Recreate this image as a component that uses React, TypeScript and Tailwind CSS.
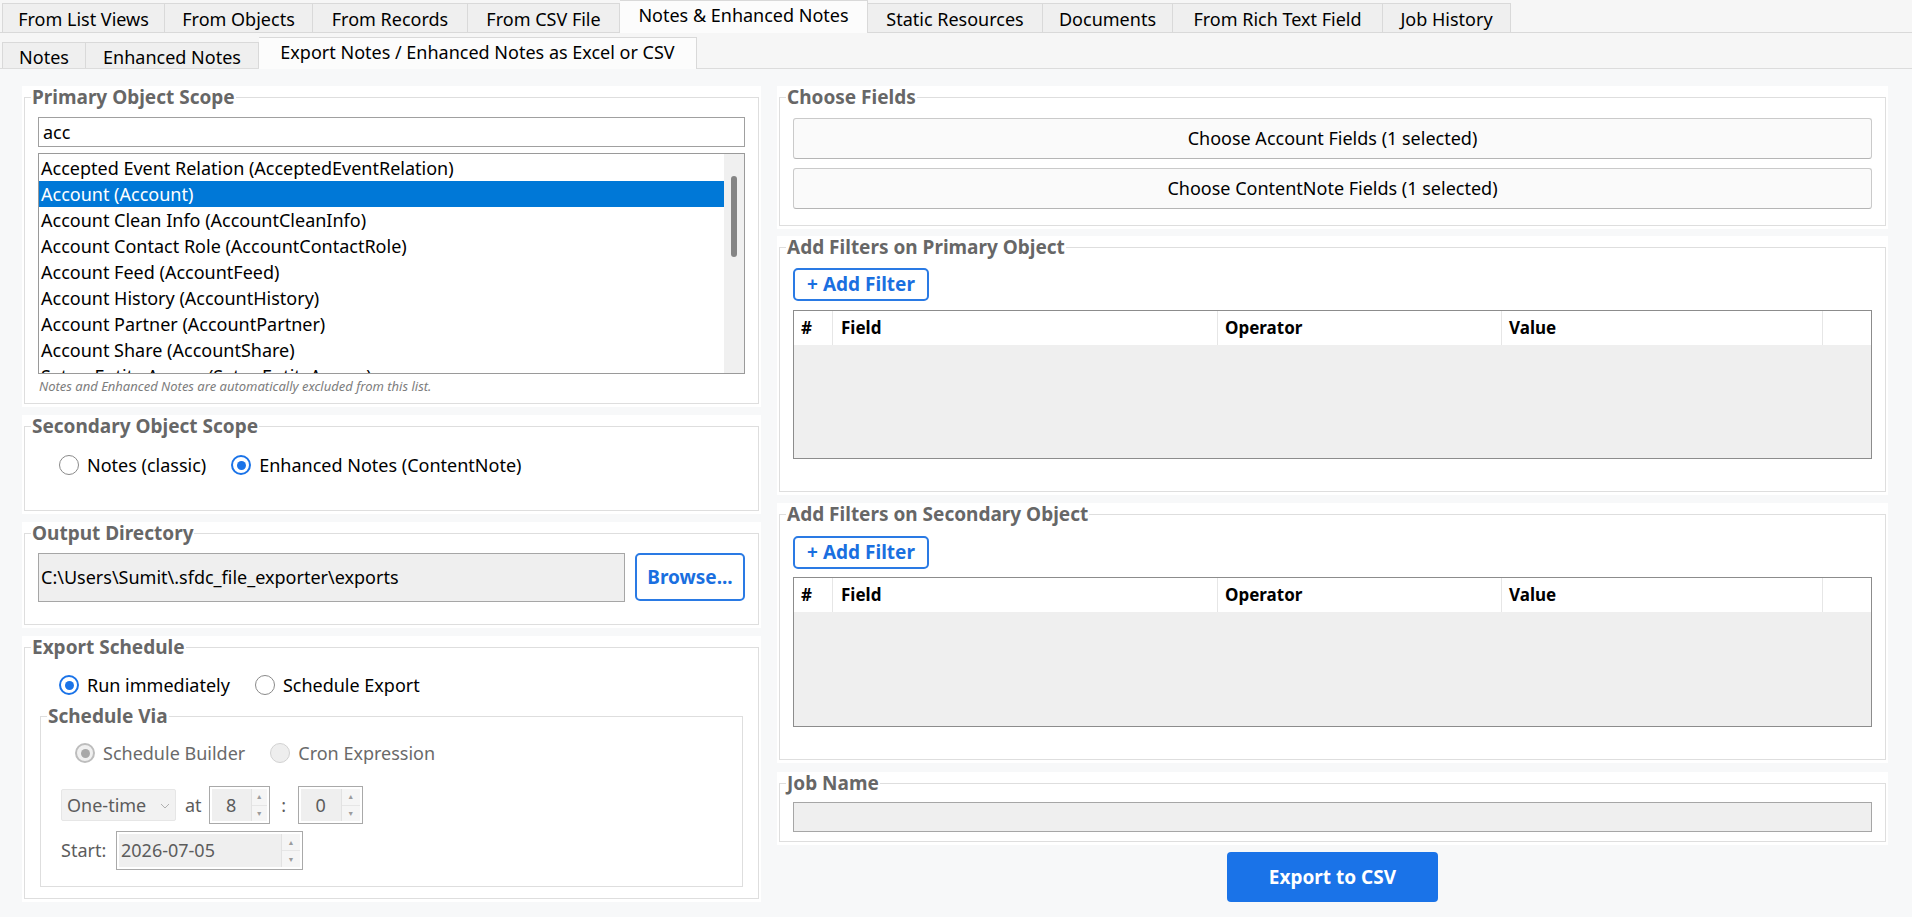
import React from "react";

function Group({
  title,
  outer,
  children,
}: {
  title: string;
  outer: string;
  children?: React.ReactNode;
}) {
  return (
    <div className={`bg-white px-[2px] pb-[3px] flex flex-col ${outer}`}>
      <fieldset className="flex-1 min-w-0 border border-[#dedede] flex flex-col">
        <legend className="ml-[6px] px-[1px] text-[19px] leading-[22px] font-bold text-[#676767]">
          {title}
        </legend>
        {children}
      </fieldset>
    </div>
  );
}

function Radio({
  checked,
  disabled,
  label,
}: {
  checked?: boolean;
  disabled?: boolean;
  label: string;
}) {
  let circle: React.ReactNode;
  if (disabled) {
    circle = checked ? (
      <div className="w-[20px] h-[20px] rounded-full border-2 border-[#bdbdbd] bg-[#f0f0f0] flex items-center justify-center">
        <div className="w-[9px] h-[9px] rounded-full bg-[#a8a8a8]" />
      </div>
    ) : (
      <div className="w-[20px] h-[20px] rounded-full border border-[#d2d2d2] bg-[#eeeeee]" />
    );
  } else {
    circle = checked ? (
      <div className="w-[20px] h-[20px] rounded-full border-2 border-[#1a73e8] bg-white flex items-center justify-center">
        <div className="w-[9px] h-[9px] rounded-full bg-[#1a73e8]" />
      </div>
    ) : (
      <div className="w-[20px] h-[20px] rounded-full border-[1.5px] border-[#8a8a8a] bg-white" />
    );
  }
  return (
    <div className="flex items-center gap-[8px] h-[24px]">
      {circle}
      <span className={disabled ? "text-[#6a6a6a]" : "text-black"}>{label}</span>
    </div>
  );
}

function Arrows({ w }: { w: string }) {
  return (
    <div className={`${w} flex flex-col bg-[#f5f5f5] border-l border-[#e2e2e2]`}>
      <div className="flex-1 flex items-center justify-center text-[7px] leading-none text-[#9c9c9c]">
        ▲
      </div>
      <div className="flex-1 flex items-center justify-center text-[7px] leading-none text-[#9c9c9c] border-t border-[#e6e6e6]">
        ▼
      </div>
    </div>
  );
}

function FilterTable({ h }: { h: string }) {
  return (
    <div className={`border border-[#8c8c8c] flex flex-col ${h}`}>
      <div className="flex h-[34px] bg-white font-bold text-black text-[17px]">
        <div className="w-[39px] pl-[7px] border-r border-[#e6e6e6] flex items-center">#</div>
        <div className="w-[385px] pl-[8px] border-r border-[#e6e6e6] flex items-center">Field</div>
        <div className="w-[284px] pl-[7px] border-r border-[#e6e6e6] flex items-center">Operator</div>
        <div className="w-[321px] pl-[7px] border-r border-[#e6e6e6] flex items-center">Value</div>
        <div className="flex-1" />
      </div>
      <div className="flex-1 bg-[#efefef]" />
    </div>
  );
}

function AddFilter() {
  return (
    <button className="w-[136px] h-[33px] border-2 border-[#2a7ae4] rounded-[5px] bg-white text-[#1a6fe0] font-bold text-[19px] leading-none flex items-center justify-center">
      + Add Filter
    </button>
  );
}

const items = [
  "Accepted Event Relation (AcceptedEventRelation)",
  "Account (Account)",
  "Account Clean Info (AccountCleanInfo)",
  "Account Contact Role (AccountContactRole)",
  "Account Feed (AccountFeed)",
  "Account History (AccountHistory)",
  "Account Partner (AccountPartner)",
  "Account Share (AccountShare)",
  "Setup Entity Access (SetupEntityAccess)",
];

export default function App() {
  const topTabs: { label: string; w: string; sel?: boolean }[] = [
    { label: "From List Views", w: "w-[163px] border-l" },
    { label: "From Objects", w: "w-[148px]" },
    { label: "From Records", w: "w-[155px]" },
    { label: "From CSV File", w: "w-[152px]" },
    { label: "Notes & Enhanced Notes", w: "w-[248px]", sel: true },
    { label: "Static Resources", w: "w-[175px]" },
    { label: "Documents", w: "w-[130px]" },
    { label: "From Rich Text Field", w: "w-[210px]" },
    { label: "Job History", w: "w-[128px]" },
  ];
  const subTabs: { label: string; w: string; sel?: boolean }[] = [
    { label: "Notes", w: "w-[84px] border-l" },
    { label: "Enhanced Notes", w: "w-[173px]" },
    { label: "Export Notes / Enhanced Notes as Excel or CSV", w: "w-[438px]", sel: true },
  ];

  return (
    <div className="w-[1912px] h-[917px] overflow-hidden bg-[#f7f8f9] font-['Noto_Sans',sans-serif] text-[18px] text-black">
      {/* top tabs */}
      <div className="h-[33px] flex items-end pl-[2px] bg-[#f6f6f6] border-b border-[#d9d9d9]">
        {topTabs.map((t) =>
          t.sel ? (
            <div
              key={t.label}
              className={`${t.w} h-[33px] -mb-px bg-[#fcfcfc] border-t border-r border-[#d9d9d9] flex items-center justify-center pb-[3px] whitespace-nowrap`}
            >
              {t.label}
            </div>
          ) : (
            <div
              key={t.label}
              className={`${t.w} h-[29px] bg-[#efefef] border-t border-r border-[#d9d9d9] flex items-center justify-center pt-[2px] whitespace-nowrap`}
            >
              {t.label}
            </div>
          )
        )}
      </div>
      {/* sub tabs */}
      <div className="h-[36px] flex items-end pl-[2px] bg-[#f6f6f6] border-b border-[#dcdcdc]">
        {subTabs.map((t) =>
          t.sel ? (
            <div
              key={t.label}
              className={`${t.w} h-[32px] -mb-px bg-[#fcfcfc] border-t border-r border-[#d9d9d9] flex items-center justify-center pb-[2px] whitespace-nowrap`}
            >
              {t.label}
            </div>
          ) : (
            <div
              key={t.label}
              className={`${t.w} h-[26px] bg-[#efefef] border-t border-r border-[#d9d9d9] flex items-center justify-center pt-[3px] whitespace-nowrap`}
            >
              {t.label}
            </div>
          )
        )}
      </div>

      {/* content */}
      <div className="flex gap-[16px] pl-[22px] pr-[24px] pt-[17px]">
        {/* left column */}
        <div className="w-[739px] flex flex-col gap-[8px]">
          <Group title="Primary Object Scope" outer="h-[321px]">
            <div className="px-[13px] pt-[9px] flex flex-col">
              <div className="h-[30px] border border-[#a0a0a0] bg-white flex items-center pl-[4px]">acc</div>
              <div className="mt-[6px] h-[221px] border border-[#9a9a9a] bg-white flex overflow-hidden">
                <div className="flex-1 h-full overflow-hidden pt-[1px]">
                  {items.map((it, i) => (
                    <div
                      key={it}
                      className={
                        i === 1
                          ? "h-[26px] leading-[26px] pl-[2px] bg-[#0078d7] text-white whitespace-nowrap"
                          : "h-[26px] leading-[26px] pl-[2px] whitespace-nowrap"
                      }
                    >
                      {it}
                    </div>
                  ))}
                </div>
                <div className="w-[20px] bg-[#f0f0f0] pt-[22px] flex flex-col">
                  <div className="ml-[7px] w-[6px] h-[81px] rounded-full bg-[#858585]" />
                </div>
              </div>
              <div className="mt-[5px] text-[13px] leading-[14px] italic text-[#7d7d7d] pl-[1px] whitespace-nowrap">
                Notes and Enhanced Notes are automatically excluded from this list.
              </div>
            </div>
          </Group>

          <Group title="Secondary Object Scope" outer="h-[99px]">
            <div className="pl-[34px] pt-[16px] flex gap-[25px]">
              <Radio label="Notes (classic)" />
              <Radio label="Enhanced Notes (ContentNote)" checked />
            </div>
          </Group>

          <Group title="Output Directory" outer="h-[106px]">
            <div className="px-[13px] pt-[9px] flex gap-[10px]">
              <div className="flex-1 h-[49px] border border-[#a6a6a6] bg-[#efefef] flex items-center pl-[2px]">
                C:\Users\Sumit\.sfdc_file_exporter\exports
              </div>
              <button className="w-[110px] h-[48px] border-2 border-[#2a7ae4] rounded-[5px] bg-white text-[#1a6fe0] font-bold text-[19px]">
                Browse...
              </button>
            </div>
          </Group>

          <Group title="Export Schedule" outer="h-[266px]">
            <div className="pl-[34px] pt-[15px] flex gap-[25px]">
              <Radio label="Run immediately" checked />
              <Radio label="Schedule Export" />
            </div>
            <fieldset className="mx-[15px] mt-[8px] border border-[#dedede] min-w-0 pb-[16px]">
              <legend className="ml-[6px] px-[1px] text-[19px] leading-[22px] font-bold text-[#676767]">
                Schedule Via
              </legend>
              <div className="pl-[34px] pt-[14px] flex gap-[25px]">
                <Radio label="Schedule Builder" checked disabled />
                <Radio label="Cron Expression" disabled />
              </div>
              <div className="pl-[20px] mt-[21px] h-[38px] flex items-center text-[#5c5c5c]">
                <div className="w-[115px] h-[32px] bg-[#f2f2f2] border border-[#e6e6e6] rounded-[2px] flex items-center justify-between pl-[5px] pr-[5px]">
                  <span>One-time</span>
                  <svg width="10" height="6" viewBox="0 0 10 6" className="mt-[1px]">
                    <path d="M1 1 L5 5 L9 1" fill="none" stroke="#b0b0b0" strokeWidth="1" />
                  </svg>
                </div>
                <span className="ml-[9px]">at</span>
                <div className="ml-[7px] w-[61px] h-[38px] border border-[#a9a9a9] bg-white p-[2px] flex">
                  <div className="flex-1 bg-[#efefef] flex items-center justify-center">8</div>
                  <Arrows w="w-[16px]" />
                </div>
                <span className="w-[28px] text-center">:</span>
                <div className="w-[65px] h-[38px] border border-[#a9a9a9] bg-white p-[2px] flex">
                  <div className="flex-1 bg-[#efefef] flex items-center justify-center">0</div>
                  <Arrows w="w-[19px]" />
                </div>
              </div>
              <div className="pl-[20px] mt-[7px] h-[39px] flex items-center text-[#5c5c5c]">
                <span className="w-[55px]">Start:</span>
                <div className="w-[187px] h-[39px] border border-[#a9a9a9] bg-white p-[2px] flex">
                  <div className="flex-1 bg-[#efefef] flex items-center pl-[2px]">2026-07-05</div>
                  <Arrows w="w-[19px]" />
                </div>
              </div>
            </fieldset>
          </Group>
        </div>

        {/* right column */}
        <div className="flex-1 flex flex-col">
          <Group title="Choose Fields" outer="h-[143px]">
            <div className="px-[13px] pt-[10px] flex flex-col gap-[9px]">
              <button className="h-[41px] bg-[#fafafa] border border-[#cacaca] border-b-[#b5b5b5] rounded-[3px] text-[18px]">
                Choose Account Fields (1 selected)
              </button>
              <button className="h-[41px] bg-[#fafafa] border border-[#cacaca] border-b-[#b5b5b5] rounded-[3px] text-[18px]">
                Choose ContentNote Fields (1 selected)
              </button>
            </div>
          </Group>

          <Group title="Add Filters on Primary Object" outer="h-[259px] mt-[7px]">
            <div className="px-[13px] pt-[10px] flex flex-col">
              <AddFilter />
              <div className="mt-[9px]">
                <FilterTable h="h-[149px]" />
              </div>
            </div>
          </Group>

          <Group title="Add Filters on Secondary Object" outer="h-[260px] mt-[8px]">
            <div className="px-[13px] pt-[11px] flex flex-col">
              <AddFilter />
              <div className="mt-[8px]">
                <FilterTable h="h-[150px]" />
              </div>
            </div>
          </Group>

          <Group title="Job Name" outer="h-[73px] mt-[9px]">
            <div className="px-[13px] pt-[8px]">
              <div className="h-[30px] border border-[#a6a6a6] bg-[#efefef]" />
            </div>
          </Group>

          <div className="mt-[7px] flex justify-center">
            <button className="w-[211px] h-[50px] bg-[#1a73e8] rounded-[4px] text-white font-bold text-[19px]">
              Export to CSV
            </button>
          </div>
        </div>
      </div>
    </div>
  );
}
